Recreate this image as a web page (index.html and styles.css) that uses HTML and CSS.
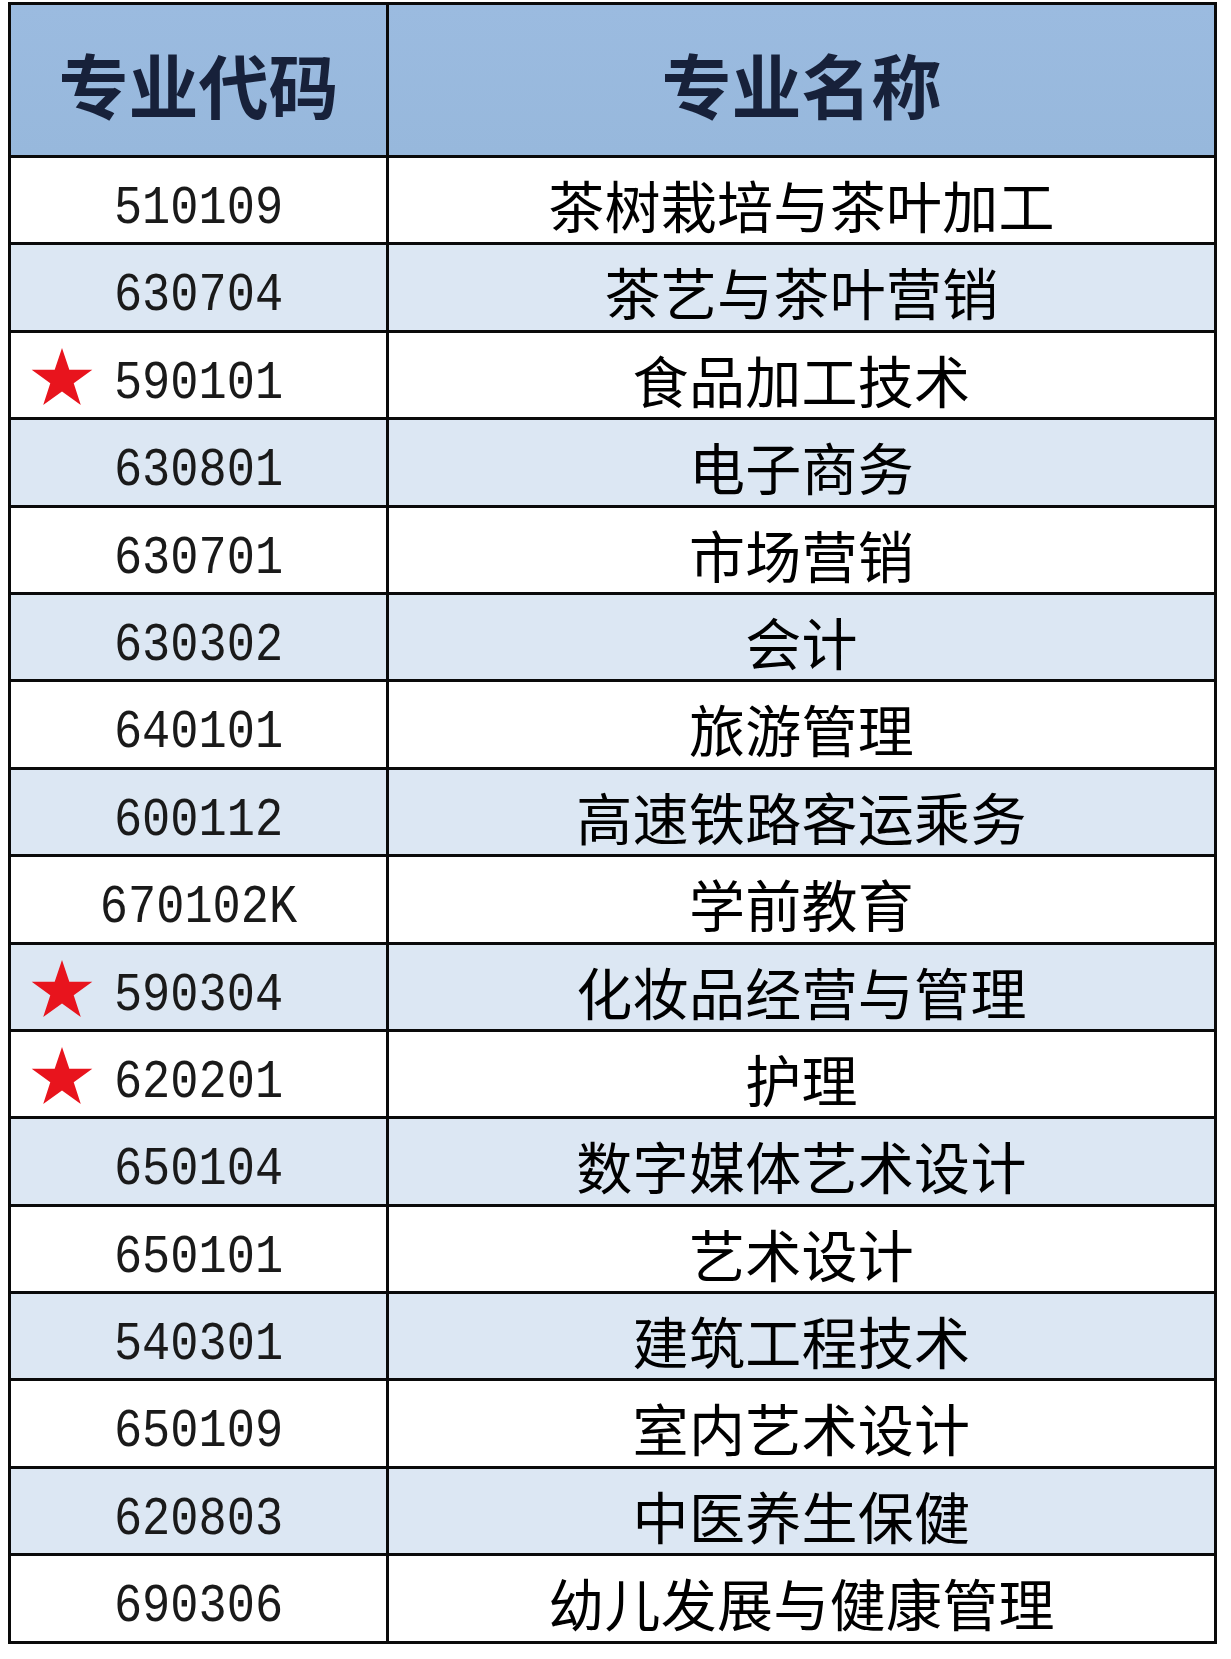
FILE: index.html
```html
<!DOCTYPE html>
<html lang="zh-CN">
<head>
<meta charset="utf-8">
<title>专业列表</title>
<link rel="stylesheet" href="styles.css">
</head>
<body>
<div class="table">
  <div class="row head">
    <div class="cell code">专业代码</div>
    <div class="cell name">专业名称</div>
  </div>
  <div class="row"><div class="cell code"><span class="num">510109</span></div><div class="cell name">茶树栽培与茶叶加工</div></div>
  <div class="row alt"><div class="cell code"><span class="num">630704</span></div><div class="cell name">茶艺与茶叶营销</div></div>
  <div class="row"><div class="cell code"><svg class="star" viewBox="0 0 100 95"><polygon points="50,0 61.8,35.1 98.9,35.1 68.9,56.8 80.3,91.9 50,70.2 19.7,91.9 31.1,56.8 1.1,35.1 38.2,35.1"/></svg><span class="num">590101</span></div><div class="cell name">食品加工技术</div></div>
  <div class="row alt"><div class="cell code"><span class="num">630801</span></div><div class="cell name">电子商务</div></div>
  <div class="row"><div class="cell code"><span class="num">630701</span></div><div class="cell name">市场营销</div></div>
  <div class="row alt"><div class="cell code"><span class="num">630302</span></div><div class="cell name">会计</div></div>
  <div class="row"><div class="cell code"><span class="num">640101</span></div><div class="cell name">旅游管理</div></div>
  <div class="row alt"><div class="cell code"><span class="num">600112</span></div><div class="cell name">高速铁路客运乘务</div></div>
  <div class="row"><div class="cell code"><span class="num">670102K</span></div><div class="cell name">学前教育</div></div>
  <div class="row alt"><div class="cell code"><svg class="star" viewBox="0 0 100 95"><polygon points="50,0 61.8,35.1 98.9,35.1 68.9,56.8 80.3,91.9 50,70.2 19.7,91.9 31.1,56.8 1.1,35.1 38.2,35.1"/></svg><span class="num">590304</span></div><div class="cell name">化妆品经营与管理</div></div>
  <div class="row"><div class="cell code"><svg class="star" viewBox="0 0 100 95"><polygon points="50,0 61.8,35.1 98.9,35.1 68.9,56.8 80.3,91.9 50,70.2 19.7,91.9 31.1,56.8 1.1,35.1 38.2,35.1"/></svg><span class="num">620201</span></div><div class="cell name">护理</div></div>
  <div class="row alt"><div class="cell code"><span class="num">650104</span></div><div class="cell name">数字媒体艺术设计</div></div>
  <div class="row"><div class="cell code"><span class="num">650101</span></div><div class="cell name">艺术设计</div></div>
  <div class="row alt"><div class="cell code"><span class="num">540301</span></div><div class="cell name">建筑工程技术</div></div>
  <div class="row"><div class="cell code"><span class="num">650109</span></div><div class="cell name">室内艺术设计</div></div>
  <div class="row alt"><div class="cell code"><span class="num">620803</span></div><div class="cell name">中医养生保健</div></div>
  <div class="row last"><div class="cell code"><span class="num">690306</span></div><div class="cell name">幼儿发展与健康管理</div></div>
</div>
</body>
</html>
```
FILE: styles.css
```css
html, body {
  margin: 0;
  padding: 0;
  background: #ffffff;
}

body {
  padding: 2px 0 0 8px;
  font-family: "Noto Sans CJK SC", "Noto Sans", sans-serif;
  color: #000;
}

.table {
  box-sizing: border-box;
  width: 1209px;
  border: 3px solid #0a0a0a;
  display: flex;
  flex-direction: column;
}

.row {
  box-sizing: border-box;
  display: grid;
  grid-template-columns: 378px 1fr;
  height: 87.4px;
  border-bottom: 3px solid #0a0a0a;
  background: #ffffff;
}

.row.alt {
  background: #dce7f3;
}

.row.last {
  border-bottom: none;
  height: 84.4px;
}

.row.head {
  height: 153px;
  background: linear-gradient(#9bbbe0, #97b8dc);
}

.cell {
  position: relative;
  display: flex;
  align-items: center;
  justify-content: center;
  box-sizing: border-box;
}

.cell.code {
  border-right: 3px solid #0a0a0a;
  padding-top: 15px;
  padding-right: 0;
}

.cell.name {
  padding-top: 5px;
  font-size: 56px;
  font-weight: 400;
  letter-spacing: 0.3px;
}

.head .cell.code,
.head .cell.name {
  font-size: 70px;
  font-weight: 700;
  color: #17213a;
  padding-top: 6px;
  letter-spacing: 0;
}

.num {
  display: inline-block;
  font-family: "Liberation Mono", "DejaVu Sans Mono", monospace;
  font-size: 47px;
  line-height: 1;
  transform: scaleY(1.16);
  color: #1a1a1a;
}

.star {
  position: absolute;
  left: 20px;
  top: 50%;
  width: 62px;
  height: 59px;
  margin-top: -28px;
  fill: #e8141d;
}
```
